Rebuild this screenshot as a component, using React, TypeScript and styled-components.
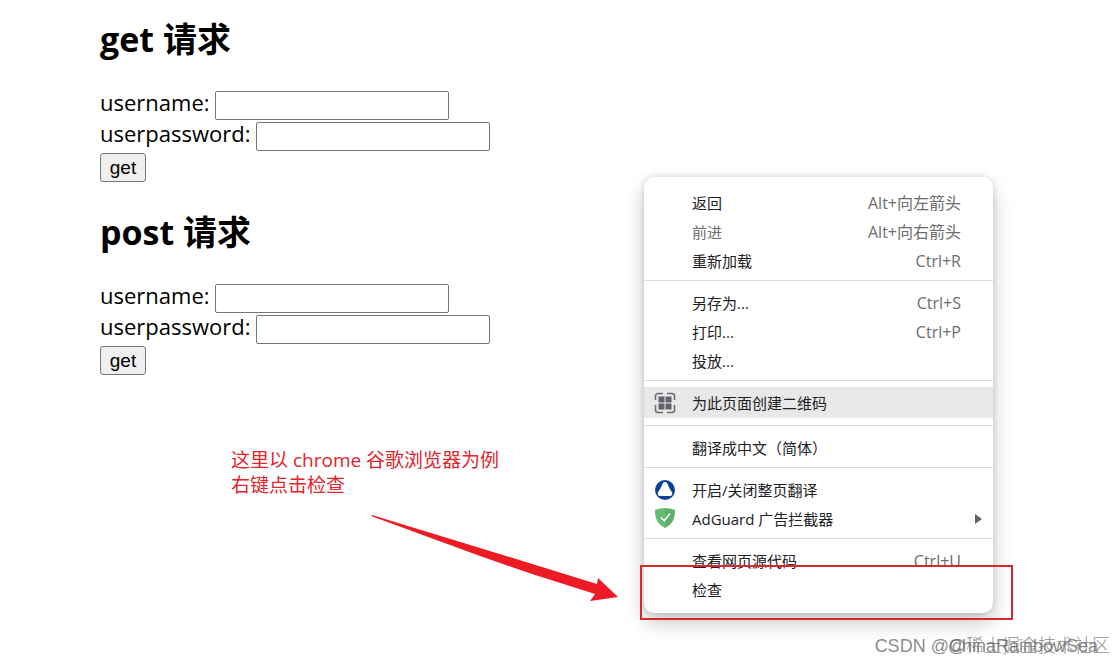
import React, { useId } from "react";
import styled, { createGlobalStyle } from "styled-components";

const GlobalStyle = createGlobalStyle`
  *, *::before, *::after { box-sizing: border-box; }
  body {
    margin: 0;
    background: #fff;
    color: #000;
    font-family: "Open Sans", "Noto Sans CJK SC", sans-serif;
  }
`;

const Page = styled.div`
  position: relative;
  min-height: 100vh;
  overflow: hidden;
`;

const Content = styled.main`
  padding: 16px 100px 0;
`;

const RequestForm = styled.form`
  margin-bottom: 26px;
`;

const Heading = styled.h2`
  margin: 0 0 28px;
  font-size: 34px;
  line-height: 46px;
  font-weight: 700;
`;

const Field = styled.div`
  display: flex;
  align-items: center;
  gap: 5px;
  height: 31px;
`;

const FieldLabel = styled.label`
  padding-bottom: 6px;
  font-size: 22px;
  line-height: 25px;
`;

const TextInput = styled.input`
  width: 234px;
  height: 29px;
  padding: 1px 4px;
  border: 1px solid #767676;
  border-radius: 2px;
  background: #fff;
  font: 18px "Liberation Sans", sans-serif;
`;

const SubmitButton = styled.button`
  height: 29px;
  width: 46px;
  padding: 0;
  border: 1px solid #767676;
  border-radius: 3px;
  background: #efefef;
  color: #000;
  font: 19px "Liberation Sans", sans-serif;
`;

const Menu = styled.div`
  position: absolute;
  top: 177px;
  left: 644px;
  width: 349px;
  padding: 4px 0;
  border-radius: 10px;
  background: #fff;
  box-shadow: 0 10px 20px rgba(0, 0, 0, 0.22), 0 0 6px rgba(0, 0, 0, 0.14);
`;

const MenuGroup = styled.div`
  padding: 7px 0 5px;
  & + & { border-top: 1px solid #dadce0; }
`;

const MenuItem = styled.button<{ $active?: boolean; $submenu?: boolean }>`
  display: grid;
  grid-template-columns: 22px 1fr auto;
  column-gap: 16px;
  align-items: center;
  width: 100%;
  height: ${(p) => (p.$active ? 31 : 29)}px;
  margin: ${(p) => (p.$active ? "-1px 0 2px" : "0")};
  padding: 0 ${(p) => (p.$submenu ? 10 : 32)}px 0 10px;
  border: 0;
  background: ${(p) => (p.$active ? "#e8e8e8" : "transparent")};
  color: #202124;
  font-family: inherit;
  font-size: 15px;
  line-height: 20px;
  text-align: left;
  &:disabled { color: #6b6d70; }
`;

const Shortcut = styled.span`
  color: #6b6d70;
  font-size: 16px;
`;

const ItemIcon = styled.svg`
  width: 22px;
  height: 22px;
`;

const SubmenuArrow = styled.svg`
  width: 8px;
  height: 10px;
`;

const Note = styled.p`
  position: absolute;
  top: 448px;
  left: 231px;
  margin: 0;
  color: #e3242b;
  font-size: 19px;
  line-height: 25px;
`;

const Arrow = styled.svg`
  position: absolute;
  top: 512px;
  left: 368px;
  width: 252px;
  height: 92px;
`;

const Frame = styled.div`
  position: absolute;
  top: 565px;
  left: 640px;
  width: 373px;
  height: 55px;
  border: 2px solid #d9272e;
`;

const Watermark = styled.span<{ $right: number }>`
  position: absolute;
  right: ${(p) => p.$right}px;
  bottom: 4px;
  color: rgba(100, 100, 100, 0.75);
  font-family: "Liberation Sans", "Noto Sans CJK SC", sans-serif;
  font-size: 18px;
  font-weight: 300;
  line-height: 24px;
  white-space: nowrap;
`;

const QrIcon = () => (
  <ItemIcon viewBox="0 0 22 22" fill="none" aria-hidden="true">
    <path
      d="M1.500 8V4a2.500 2.500 0 0 1 2.500-2.500H9M13 1.500h5A2.500 2.500 0 0 1 20.500 4v4M20.500 13v5a2.500 2.500 0 0 1-2.500 2.500h-5M9 20.500H4A2.500 2.500 0 0 1 1.500 18v-5"
      stroke="#6b6d70"
      strokeWidth="1.6"
    />
    <path d="M4.500 4.500h6v6h-6zM11.500 4.500h6v6h-6zM4.500 11.500h6v6h-6zM11.500 11.500h6v6h-6z" fill="#5f6368" />
  </ItemIcon>
);

const TranslateIcon = () => (
  <ItemIcon viewBox="0 0 22 22" aria-hidden="true">
    <circle cx="11" cy="11" r="10" fill="#08429b" />
    <path
      d="M11 3c-1.500 0-2.300 1-2.800 2.500C7.400 8 5.900 10.500 4.300 12.700c-1.400 2-.2 4.300 2.100 4.300h9.200c2.300 0 3.500-2.300 2.100-4.300C16.100 10.500 14.600 8 13.800 5.500 13.300 4 12.500 3 11 3Z"
      fill="#fff"
    />
  </ItemIcon>
);

const ShieldIcon = () => (
  <ItemIcon viewBox="0 0 22 22" aria-hidden="true">
    <path d="M11 0C7.500 0 4 .7 1 2c0 7 1.200 13.500 10 18V0Z" fill="#68bc71" />
    <path d="M11 0c3.500 0 7 .7 10 2 0 7-1.200 13.500-10 18V0Z" fill="#5eb069" />
    <path d="m7 9.500 3.200 3.200L16 5.600" fill="none" stroke="#fff" strokeWidth="1.6" />
  </ItemIcon>
);

type Entry = {
  label: string;
  shortcut?: string;
  icon?: React.ReactNode;
  disabled?: boolean;
  active?: boolean;
  submenu?: boolean;
};

const groups: Entry[][] = [
  [
    { label: "返回", shortcut: "Alt+向左箭头" },
    { label: "前进", shortcut: "Alt+向右箭头", disabled: true },
    { label: "重新加载", shortcut: "Ctrl+R" },
  ],
  [
    { label: "另存为...", shortcut: "Ctrl+S" },
    { label: "打印...", shortcut: "Ctrl+P" },
    { label: "投放..." },
  ],
  [{ label: "为此页面创建二维码", icon: <QrIcon />, active: true }],
  [{ label: "翻译成中文（简体）" }],
  [
    { label: "开启/关闭整页翻译", icon: <TranslateIcon /> },
    { label: "AdGuard 广告拦截器", icon: <ShieldIcon />, submenu: true },
  ],
  [{ label: "查看网页源代码", shortcut: "Ctrl+U" }, { label: "检查" }],
];

function Request({ title }: { title: string }) {
  const id = useId();
  return (
    <RequestForm onSubmit={(e) => e.preventDefault()}>
      <Heading>{title}</Heading>
      <Field>
        <FieldLabel htmlFor={`${id}-name`}>username:</FieldLabel>
        <TextInput id={`${id}-name`} type="text" />
      </Field>
      <Field>
        <FieldLabel htmlFor={`${id}-password`}>userpassword:</FieldLabel>
        <TextInput id={`${id}-password`} type="password" />
      </Field>
      <Field>
        <SubmitButton type="submit">get</SubmitButton>
      </Field>
    </RequestForm>
  );
}

export default function App() {
  return (
    <Page>
      <GlobalStyle />
      <Content>
        <Request title="get 请求" />
        <Request title="post 请求" />
      </Content>
      <Menu role="menu">
        {groups.map((group, i) => (
          <MenuGroup key={i} role="group">
            {group.map((item) => (
              <MenuItem
                key={item.label}
                type="button"
                role="menuitem"
                disabled={item.disabled}
                $active={item.active}
                $submenu={item.submenu}
              >
                {item.icon ?? <span />}
                <span>{item.label}</span>
                {item.shortcut && <Shortcut>{item.shortcut}</Shortcut>}
                {item.submenu && (
                  <SubmenuArrow viewBox="0 0 8 10" aria-hidden="true">
                    <path d="M0 0l7 5-7 5z" fill="#5f6368" />
                  </SubmenuArrow>
                )}
              </MenuItem>
            ))}
          </MenuGroup>
        ))}
      </Menu>
      <Note>
        这里以 chrome 谷歌浏览器为例
        <br />
        右键点击检查
      </Note>
      <Arrow viewBox="0 0 252 92" aria-hidden="true">
        <path d="M3 4L4 3L112 36L229 72L230 66L250 85L222 89L227 82L164 62L112 44Z" fill="#ed1c24" />
      </Arrow>
      <Frame />
      <Watermark $right={18}>CSDN @ChinaRainbowSea</Watermark>
      <Watermark $right={6}>@稀土掘金技术社区</Watermark>
    </Page>
  );
}
